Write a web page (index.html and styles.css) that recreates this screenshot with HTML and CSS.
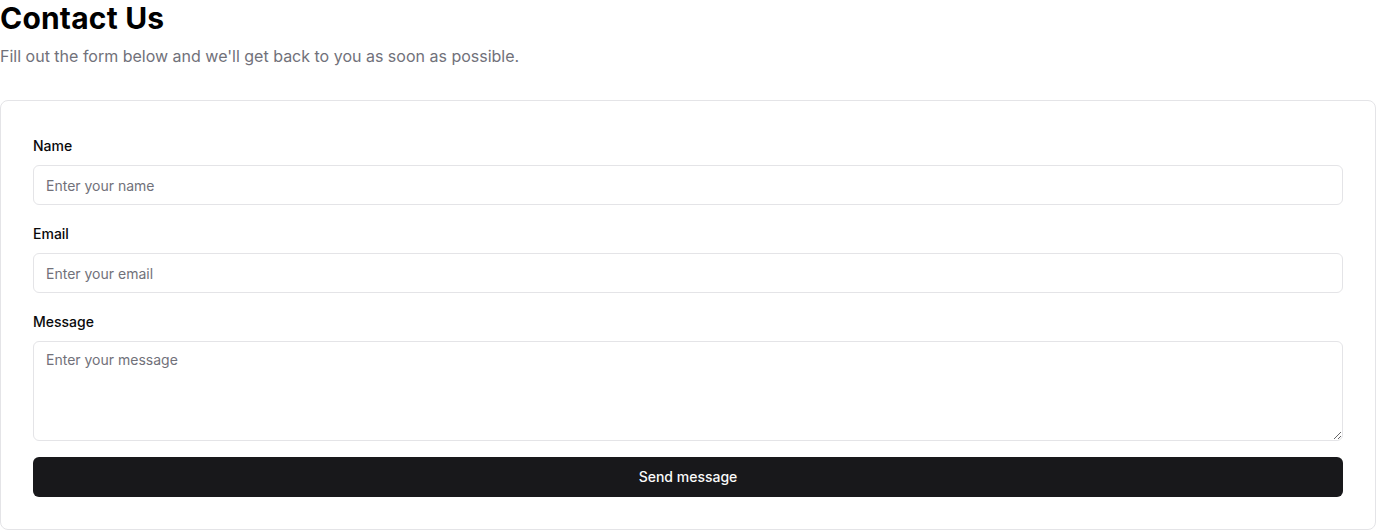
FILE: index.html
```html
<!DOCTYPE html>
<html lang="en">
<head>
<meta charset="utf-8">
<title>Contact Us</title>
<link rel="stylesheet" href="styles.css">
</head>
<body>
<div class="page">
  <header class="header">
    <h1 class="title">Contact Us</h1>
    <p class="subtitle">Fill out the form below and we'll get back to you as soon as possible.</p>
  </header>
  <form class="card">
    <div class="field">
      <label class="label" for="name">Name</label>
      <input class="input" id="name" type="text" placeholder="Enter your name">
    </div>
    <div class="field">
      <label class="label" for="email">Email</label>
      <input class="input" id="email" type="email" placeholder="Enter your email">
    </div>
    <div class="field">
      <label class="label" for="message">Message</label>
      <textarea class="input textarea" id="message" placeholder="Enter your message"></textarea>
    </div>
    <button class="button" type="button">Send message</button>
  </form>
</div>
</body>
</html>
```

FILE: styles.css
```css
* { box-sizing: border-box; }
html, body { margin: 0; padding: 0; background: #ffffff; }
body {
  font-family: Inter, "Liberation Sans", sans-serif;
  color: #09090b;
}
.page { width: 1376px; }
.header { margin-bottom: 32px; }
.title {
  margin: 0;
  font-size: 30px;
  line-height: 36px;
  font-weight: 700;
  letter-spacing: 0.2px;
  color: #000;
}
.subtitle {
  margin: 8px 0 0;
  font-size: 16px;
  line-height: 24px;
  color: #71717a;
}
.card {
  border: 1px solid #e4e4e7;
  border-radius: 8px;
  padding: 32px;
  display: flex;
  flex-direction: column;
  gap: 16px;
  height: 430px;
}
.field { display: flex; flex-direction: column; gap: 7px; }
.label {
  padding-top: 1px;
  font-size: 14px;
  line-height: 24px;
  font-weight: 500;
  color: #09090b;
}
.input {
  display: block;
  width: 100%;
  height: 40px;
  border: 1px solid #e4e4e7;
  border-radius: 6px;
  padding: 8px 12px;
  font-family: inherit;
  font-size: 14px;
  line-height: 20px;
  color: #09090b;
  background: #fff;
  outline: none;
}
.input::placeholder { color: #71717a; opacity: 1; }
.textarea { height: 100px; resize: vertical; }
.button {
  height: 40px;
  width: 100%;
  border: 0;
  border-radius: 6px;
  padding: 0;
  background: #18181b;
  color: #fafafa;
  font-family: inherit;
  font-size: 14px;
  line-height: 20px;
  font-weight: 500;
}
```
